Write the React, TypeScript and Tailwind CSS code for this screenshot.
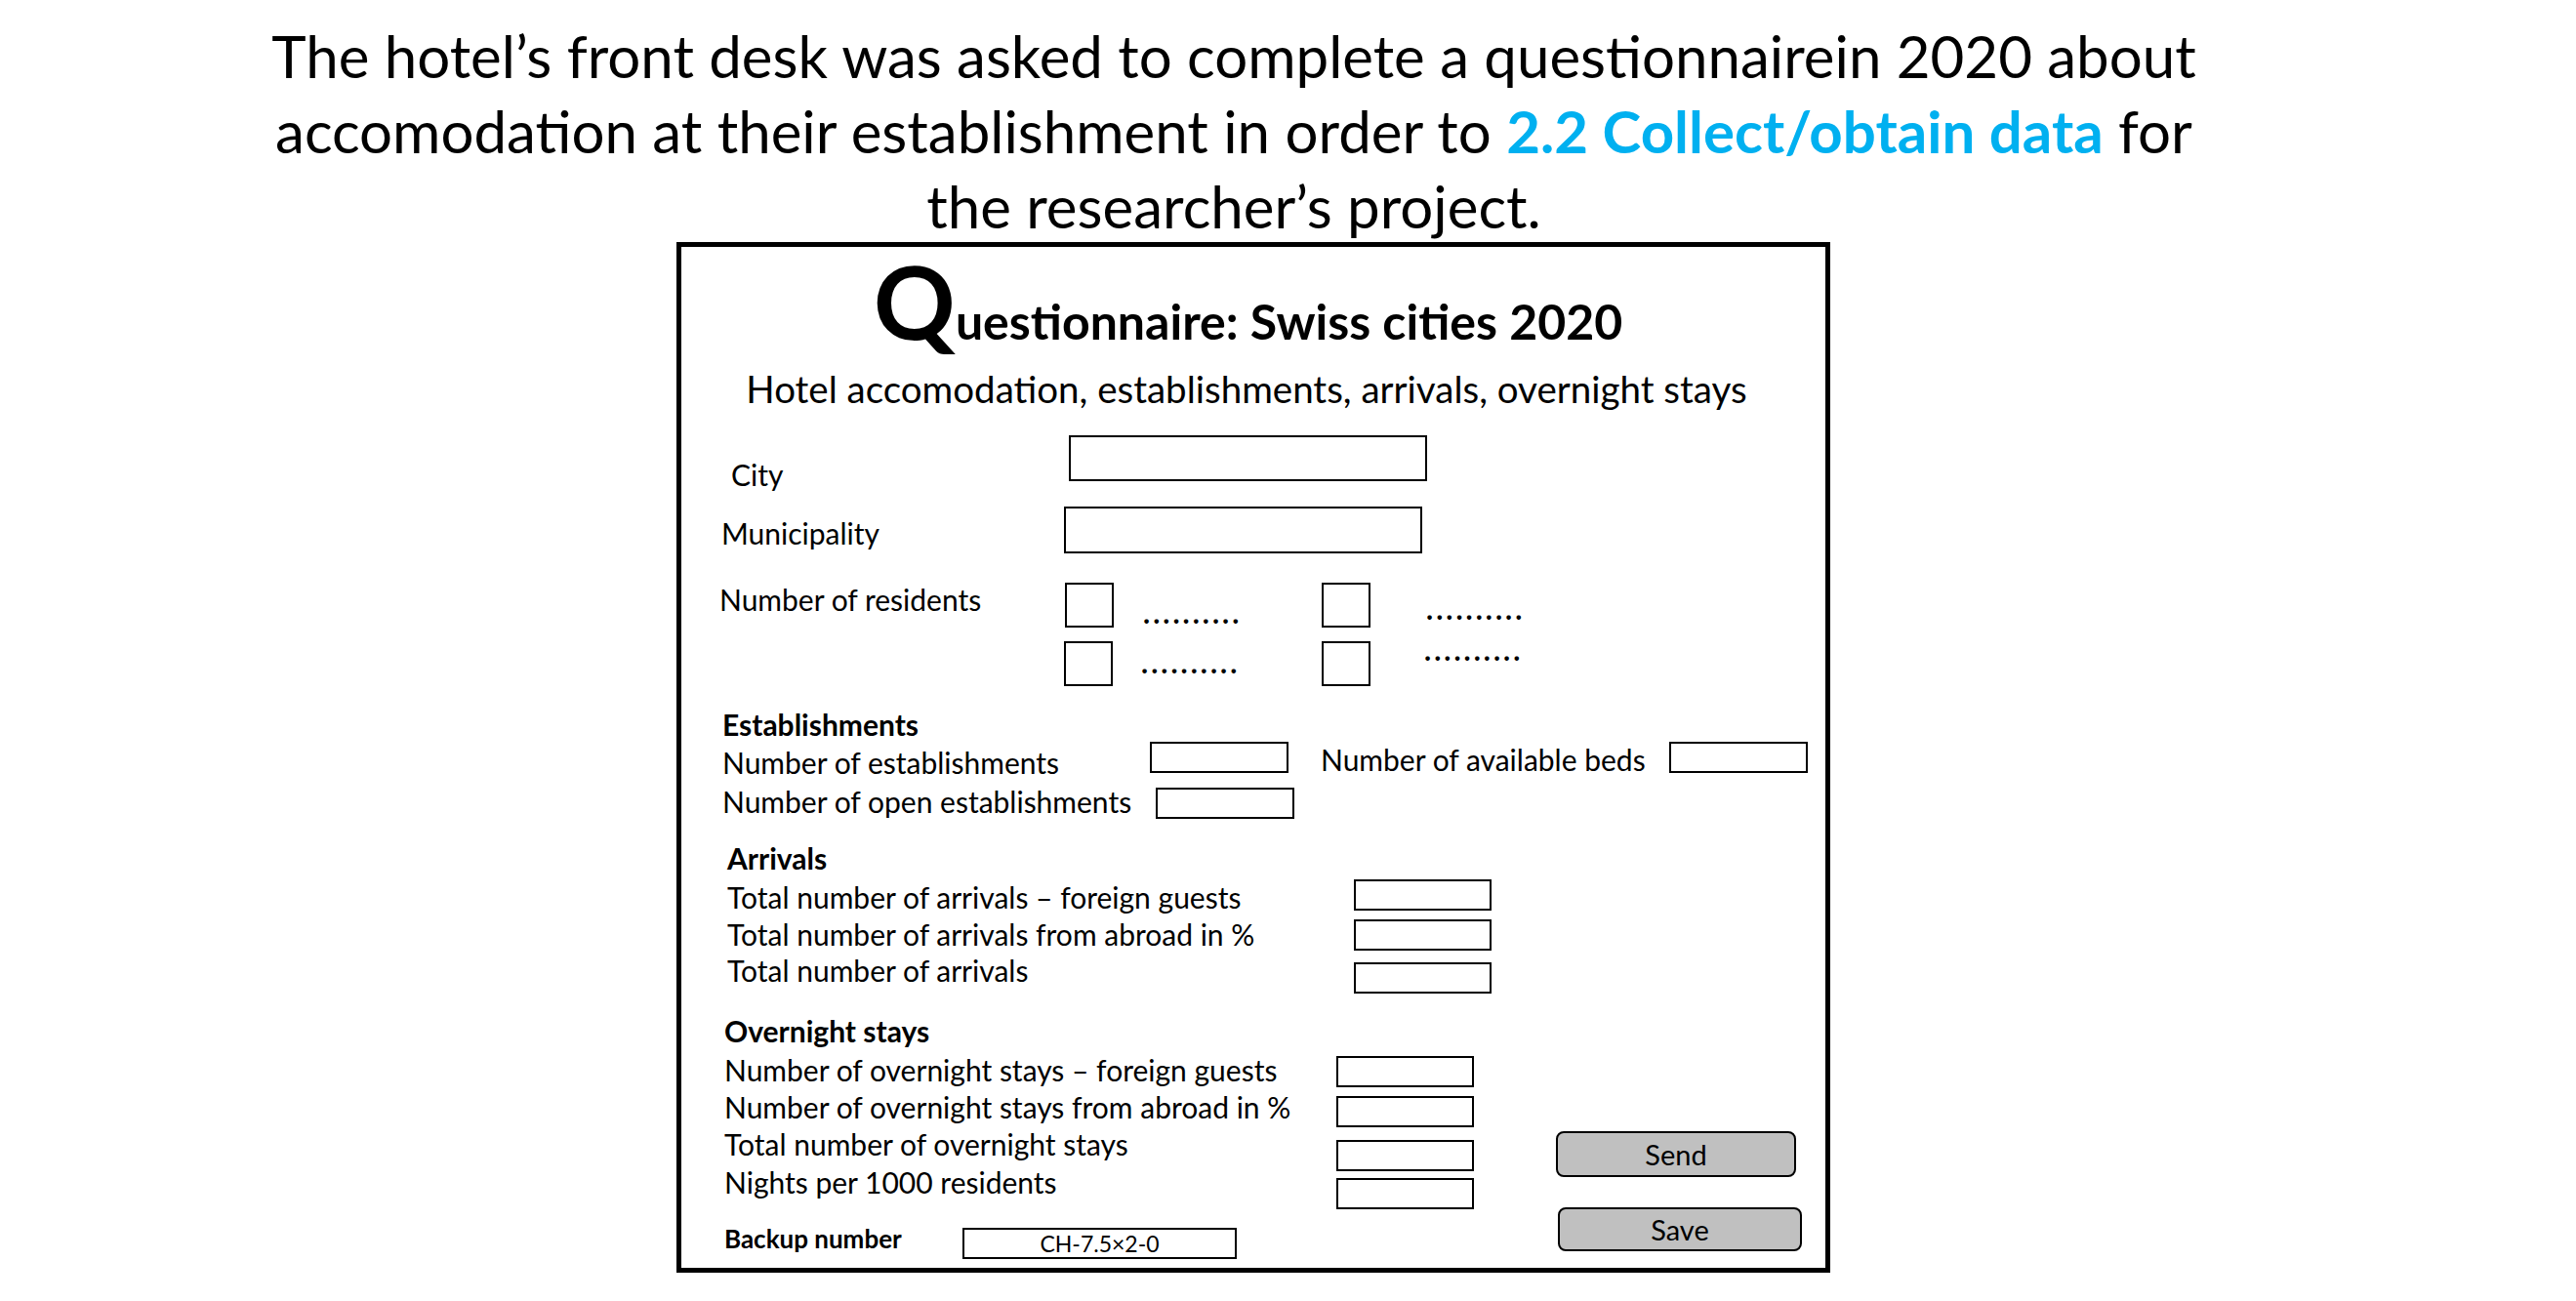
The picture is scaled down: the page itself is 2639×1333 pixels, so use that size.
import React from "react";

function Field({ className }: { className: string }) {
  return <div className={`shrink-0 border-2 border-black bg-white ${className}`} />;
}

function Dots({ className }: { className: string }) {
  return (
    <span className={`whitespace-nowrap text-[30px] font-bold leading-none tracking-[3px] ${className}`}>
          ..........
    </span>
  );
}

const arrivals = [
  { label: "Total number of arrivals – foreign guests", row: "h-[41px]", text: "mt-[3px]" },
  { label: "Total number of arrivals from abroad in %", row: "h-[44px]", text: "mt-0" },
  { label: "Total number of arrivals", row: "h-[55px]", text: "-mt-[7px]" },
];

const overnight = [
  { label: "Number of overnight stays – foreign guests", row: "h-[41px]", text: "-mt-[1px]" },
  { label: "Number of overnight stays from abroad in %", row: "h-[45px]", text: "-mt-[4px]" },
  { label: "Total number of overnight stays", row: "h-[39px]", text: "-mt-[11px]" },
  { label: "Nights per 1000 residents", row: "h-[51px]", text: "-mt-[11px]" },
];

export default function App() {
  return (
    <div className="min-h-screen w-[2639px] bg-white text-black [font-family:Lato,sans-serif]">
      {/* intro text */}
      <div className="h-[248px] w-[2528px] pt-[19px] text-center text-[60px] leading-[77px]">
        The hotel’s front desk was asked to complete a questionnairein 2020 about
        <br />
        accomodation at their establishment in order to{" "}
        <span className="font-bold text-[#00b0f0]">2.2 Collect/obtain data</span> for
        <br />
        the researcher’s project.
      </div>

      {/* questionnaire frame */}
      <div className="ml-[693px] h-[1056px] w-[1182px] border-[5px] border-black">
        <div className="h-[124px] pt-[3px] pr-[11px]">
          <div className="flex items-baseline justify-center font-bold leading-none">
            <span className="text-[104px] leading-none">Q</span>
            <span className="text-[50px] leading-none">uestionnaire: Swiss cities 2020</span>
          </div>
        </div>
        <div className="h-[63px] pt-[2px] pr-[14px] text-center text-[38.5px] leading-none">
          Hotel accomodation, establishments, arrivals, overnight stays
        </div>

        {/* City / Municipality */}
        <div className="flex h-[79px] items-start">
          <div className="ml-[51px] mt-[31px] w-[346px] shrink-0 text-[30px] leading-none">City</div>
          <Field className="mt-[6px] h-[47px] w-[367px]" />
        </div>
        <div className="flex h-[78px] items-start">
          <div className="ml-[41px] mt-[12px] w-[351px] shrink-0 text-[30px] leading-none">Municipality</div>
          <Field className="h-[48px] w-[367px]" />
        </div>

        {/* Residents */}
        <div className="flex h-[60px] items-start">
          <div className="ml-[39px] mt-[2px] w-[354px] shrink-0 whitespace-nowrap text-[30px] leading-none">
            Number of residents
          </div>
          <Field className="h-[46px] w-[50px]" />
          <div className="w-[213px] shrink-0 pl-[30px] pt-[15px]">
            <Dots className="block" />
          </div>
          <Field className="h-[46px] w-[50px]" />
          <div className="shrink-0 pl-[57px] pt-[11px]">
            <Dots className="block" />
          </div>
        </div>
        <div className="flex h-[70px] items-start">
          <div className="ml-[39px] w-[353px] shrink-0" />
          <Field className="h-[46px] w-[50px]" />
          <div className="w-[214px] shrink-0 pl-[29px] pt-[6px]">
            <Dots className="block" />
          </div>
          <Field className="h-[46px] w-[50px]" />
          <div className="-mt-[7px] shrink-0 pl-[55px]">
            <Dots className="block" />
          </div>
        </div>

        {/* Establishments */}
        <div className="flex h-[33px] items-start">
          <div className="ml-[42px] text-[30px] font-bold leading-none">Establishments</div>
        </div>
        <div className="flex h-[47px] items-start">
          <div className="ml-[42px] mt-[6px] w-[438px] shrink-0 whitespace-nowrap text-[30px] leading-none">
            Number of establishments
          </div>
          <Field className="h-[32px] w-[142px]" />
          <div className="ml-[33px] mt-[3px] w-[357px] shrink-0 whitespace-nowrap text-[30px] leading-none">
            Number of available beds
          </div>
          <Field className="h-[32px] w-[142px]" />
        </div>
        <div className="flex h-[57px] items-start">
          <div className="ml-[42px] -mt-[1px] w-[444px] shrink-0 whitespace-nowrap text-[30px] leading-none">
            Number of open establishments
          </div>
          <Field className="h-[32px] w-[142px]" />
        </div>

        {/* Arrivals */}
        <div className="flex h-[37px] items-start">
          <div className="ml-[47px] text-[30px] font-bold leading-none">Arrivals</div>
        </div>
        {arrivals.map((r) => (
          <div key={r.label} className={`flex items-start ${r.row}`}>
            <div className={`ml-[47px] w-[642px] shrink-0 whitespace-nowrap text-[30px] leading-none ${r.text}`}>
              {r.label}
            </div>
            <Field className="h-[32px] w-[141px]" />
          </div>
        ))}

        {/* Overnight stays */}
        <div className="flex h-[41px] items-start">
          <div className="ml-[44px] text-[30px] font-bold leading-none">Overnight stays</div>
        </div>
        <div className="flex">
          <div className="w-[896px] shrink-0">
            {overnight.map((r) => (
              <div key={r.label} className={`flex items-start ${r.row}`}>
                <div className={`ml-[44px] w-[627px] shrink-0 whitespace-nowrap text-[30px] leading-none ${r.text}`}>
                  {r.label}
                </div>
                <Field className="h-[32px] w-[141px]" />
              </div>
            ))}
            <div className="flex h-[32px] items-start">
              <div className="ml-[44px] -mt-[2px] w-[244px] shrink-0 whitespace-nowrap text-[26px] font-bold leading-none">
                Backup number
              </div>
              <div className="flex h-[32px] w-[281px] shrink-0 items-center justify-center border-2 border-black text-[23px] leading-none">
                CH-7.5×2-0
              </div>
            </div>
          </div>
          <div className="flex flex-col">
            <button className="mt-[77px] flex h-[47px] w-[246px] items-center justify-center rounded-[8px] border-2 border-black bg-[#c0c0c0] text-[29px] leading-none">
              Send
            </button>
            <button className="ml-[2px] mt-[31px] flex h-[45px] w-[250px] items-center justify-center rounded-[8px] border-2 border-black bg-[#c0c0c0] text-[29px] leading-none">
              Save
            </button>
          </div>
        </div>
      </div>
    </div>
  );
}
